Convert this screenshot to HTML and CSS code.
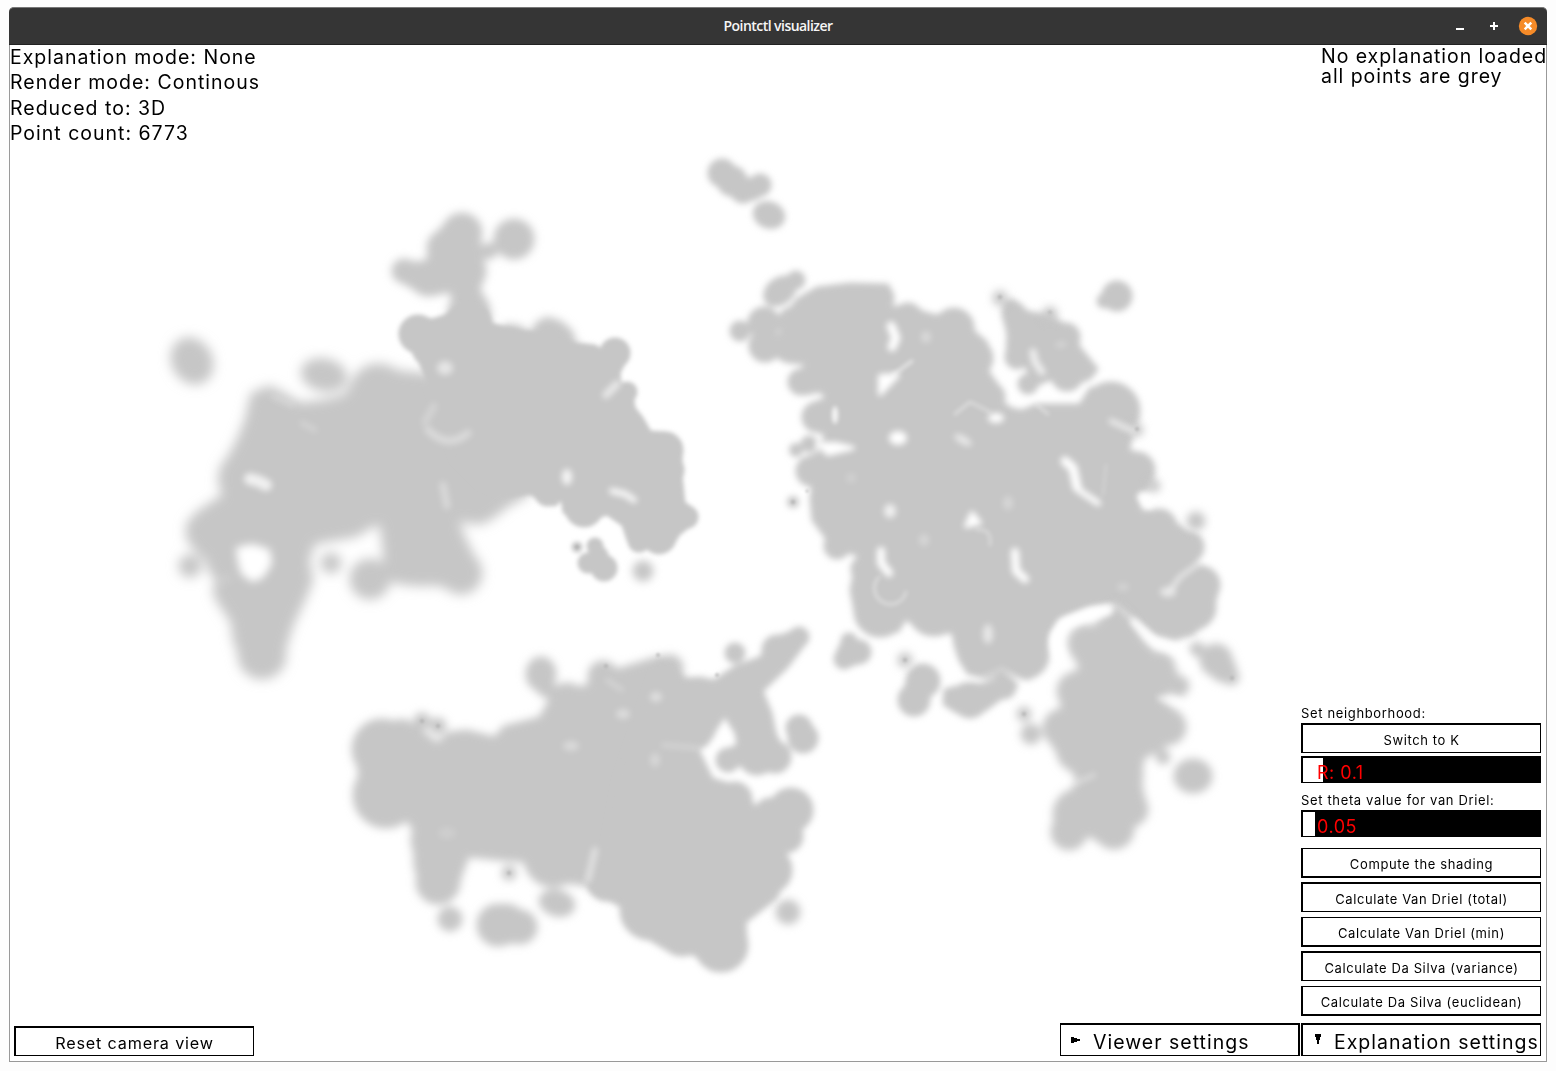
FILE: index.html
```html
<!DOCTYPE html>
<html lang="en">
<head>
<meta charset="utf-8">
<title>Pointctl visualizer</title>
<link rel="stylesheet" href="styles.css">
</head>
<body>
<div class="window">
  <header class="titlebar">
    <h1 class="title">Pointctl visualizer</h1>
    <div class="controls">
      <svg width="10" height="18" viewBox="0 0 10 18"><path d="M1 12h8" stroke="#fff" stroke-width="2"/></svg>
      <svg width="10" height="18" viewBox="0 0 10 18"><path d="M1 9h8M5 5v8" stroke="#fff" stroke-width="2"/></svg>
      <svg width="20" height="20" viewBox="0 0 20 20"><circle cx="10" cy="10" r="9.2" fill="#f68b28"/><path d="M6.7 6.7l6.6 6.6M13.3 6.7l-6.6 6.6" stroke="#fff" stroke-width="2.5"/></svg>
    </div>
  </header>
  <main class="viewport">
    <svg class="cloud" viewBox="10 45 1536 1016" width="1536" height="1016">
      <defs>
        <filter id="b1" filterUnits="userSpaceOnUse" x="10" y="45" width="1536" height="1016"><feGaussianBlur stdDeviation="2"/></filter>
        <filter id="b2" filterUnits="userSpaceOnUse" x="10" y="45" width="1536" height="1016"><feGaussianBlur stdDeviation="3"/></filter>
        <filter id="b3" filterUnits="userSpaceOnUse" x="10" y="45" width="1536" height="1016"><feGaussianBlur stdDeviation="4.200"/></filter>
        <filter id="b5" filterUnits="userSpaceOnUse" x="10" y="45" width="1536" height="1016"><feGaussianBlur stdDeviation="5.600"/></filter>
      </defs>
      <!-- left cluster -->
      <g class="pts" filter="url(#b5)">
        <ellipse cx="192" cy="361" rx="19" ry="23" transform="rotate(-30 192 361)"/>
        <ellipse cx="324" cy="375" rx="22" ry="15" transform="rotate(12 324 375)"/>
        <path d="M252 394 270 387 285 395 300 404 325 401 345 396 356 378 370 368 382 365 400 372 420 374 470 380 520 420 535 485 525 496 505 507 497 514 483 520 465 519 458 522 465 540 475 560 477 573 470 588 460 593 448 587 435 584 420 585 400 583 386 578 384 550 381 525 376 524 355 536 330 540 314 543 308 560 312 580 306 595 299 610 292 625 286 645 279 662 271 674 262 677 251 671 240 655 234 640 232 622 224 610 216 598 214 588 222 572 198 552 188 540 187 525 197 513 212 503 224 495 219 482 221 468 230 455 238 440 246 420 250 402Z"/>
        <circle cx="370" cy="579" r="19"/><circle cx="222" cy="564" r="14"/><circle cx="190" cy="566" r="10"/><circle cx="331" cy="563" r="9"/>
        <circle cx="461" cy="573" r="20"/><circle cx="476" cy="498" r="25"/><circle cx="378" cy="392" r="27"/><circle cx="262" cy="655" r="23"/>
      </g>
      <g class="gaps" filter="url(#b3)">
        <path d="M238 549 252 546 268 551 270 563 262 576 253 580 243 573 240 563Z" class="solid"/>
        <path d="M222 582 230 577" stroke-width="3" opacity=".3"/>
      </g>
      <g class="pts" filter="url(#b3)">
        <path d="M397 271 410 262 428 264 430 242 450 219 462 215 476 225 481 250 484 270 479 290 485 300 491 320 470 330 455 303 450 291 430 295 415 289 401 281Z"/>
        <circle cx="514" cy="239" r="19"/><circle cx="489" cy="251" r="7"/><circle cx="462" cy="233" r="19"/><circle cx="404" cy="271" r="11"/><circle cx="428" cy="278" r="17"/><circle cx="466" cy="271" r="19"/><circle cx="469" cy="312" r="20"/><circle cx="445" cy="248" r="17"/>
        <path d="M500 340 506 325 520 327 531 335 537 323 547 318 560 322 571 331 576 345 590 350 540 380Z"/>
        <circle cx="643" cy="571" r="9"/>
      </g>
      <g class="pts" filter="url(#b1)">
        <path d="M408 320 420 317 432 320 445 316 460 306 485 310 492 324 520 332 545 334 575 345 595 346 603 351 613 343 621 342 627 349 625 361 619 373 620 384 628 385 632 393 634 408 642 418 650 432 665 433 674 439 681 453 681 475 684 503 693 509 694 518 688 527 679 534 671 547 658 552 645 547 635 548 628 540 623 525 607 514 598 517 590 525 578 523 564 512 562 498 555 505 545 503 530 493 505 496 480 485 455 460 440 420 425 375 417 355 405 345 400 332Z"/>
        <circle cx="418" cy="334" r="18"/><circle cx="431" cy="348" r="18"/><circle cx="615" cy="353" r="14"/><circle cx="627" cy="392" r="9"/><circle cx="665" cy="450" r="17"/><circle cx="667" cy="470" r="16"/><circle cx="687" cy="517" r="10"/><circle cx="659" cy="537" r="16"/><circle cx="584" cy="508" r="18"/><circle cx="639" cy="541" r="10"/><circle cx="548" cy="492" r="13"/>
        <circle cx="577" cy="547" r="4"/><circle cx="595" cy="546" r="7"/><circle cx="604" cy="568" r="12"/><circle cx="588" cy="563" r="9"/><circle cx="598" cy="556" r="9"/>
      </g>
      <!-- islands at the top and the right cluster -->
      <g class="pts" filter="url(#b2)">
        <circle cx="722" cy="173" r="13"/><circle cx="732" cy="181" r="14"/><circle cx="743" cy="190" r="12"/><circle cx="760" cy="185" r="10"/><circle cx="752" cy="189" r="10"/>
        <ellipse cx="769" cy="215" rx="15" ry="12" transform="rotate(20 769 215)"/>
        <ellipse cx="780" cy="291" rx="17" ry="12" transform="rotate(-38 780 291)"/><circle cx="796" cy="280" r="8"/>
        <circle cx="740" cy="331" r="9"/><circle cx="764" cy="323" r="15"/><circle cx="765" cy="346" r="15"/>
        <path d="M785 316 798 299 817 288 850 284 888 285 891 295 886 308 896 307 908 306 925 313 937 316 948 311 960 310 968 317 974 332 986 342 991 355 988 372 1001 390 1001 402 1012 409 1022 411 1037 405 1080 405 1090 389 1110 384 1125 389 1134 401 1137 420 1128 450 1143 456 1151 466 1153 480 1148 489 1137 494 1141 511 1153 512 1162 511 1171 520 1186 531 1199 541 1202 552 1194 564 1207 569 1216 581 1216 598 1207 621 1193 634 1175 639 1155 634 1140 622 1115 603 1090 606 1062 617 1049 632 1046 655 1037 674 1028 679 1010 672 985 678 968 673 960 660 955 645 953 632 935 633 917 627 906 618 898 631 885 634 867 627 855 611 851 590 855 570 865 558 850 552 838 556 828 540 813 520 811 498 813 484 801 475 805 459 820 452 826 434 808 428 805 415 812 404 828 398 820 391 805 394 792 386 797 377 812 364 790 362 783 355Z"/>
        <circle cx="790" cy="346" r="16"/><circle cx="793" cy="322" r="14"/><circle cx="801" cy="382" r="12"/><circle cx="812" cy="376" r="12"/><circle cx="817" cy="417" r="14"/><circle cx="811" cy="471" r="14"/><circle cx="837" cy="546" r="12"/><circle cx="864" cy="569" r="12"/><circle cx="880" cy="611" r="25"/><circle cx="934" cy="609" r="26"/><circle cx="908" cy="317" r="13"/><circle cx="954" cy="328" r="19"/><circle cx="975" cy="358" r="17"/><circle cx="991" cy="397" r="13"/>
        <circle cx="1111" cy="411" r="28"/><circle cx="1137" cy="470" r="17"/><circle cx="1159" cy="527" r="17"/><circle cx="1188" cy="547" r="15"/><circle cx="1201" cy="585" r="18"/><circle cx="1193" cy="607" r="22"/><circle cx="1025" cy="655" r="23"/><circle cx="881" cy="298" r="12"/>
        <path d="M1003 314 1004 302 1013 300 1027 312 1050 316 1061 323 1075 329 1079 347 1097 369 1090 378 1067 387 1050 379 1028 389 1021 384 1030 375 1025 364 1013 366 1007 357 1008 334Z"/>
        <circle cx="1066" cy="337" r="13"/><circle cx="1017" cy="357" r="11"/><circle cx="1028" cy="384" r="9"/><circle cx="1067" cy="375" r="15"/><circle cx="1014" cy="314" r="11"/>
        <circle cx="1117" cy="296" r="14"/><circle cx="1104" cy="301" r="6"/>
        <circle cx="844" cy="659" r="9"/><circle cx="859" cy="652" r="11"/><circle cx="849" cy="641" r="7"/><circle cx="850" cy="653" r="12"/>
        <path d="M902 700 907 682 920 668 935 670 939 680 931 693 924 706 915 715 905 710Z"/><circle cx="923" cy="681" r="16"/><circle cx="914" cy="700" r="15"/>
        <path d="M945 690 965 685 985 684 1005 676 1017 685 1000 699 985 710 970 717 955 711 944 704Z"/><circle cx="970" cy="700" r="17"/><circle cx="1004" cy="687" r="11"/>
        <circle cx="796" cy="450" r="5.500"/><circle cx="809" cy="444" r="7"/><circle cx="793" cy="502" r="4.500"/>
      </g>
      <g class="pts" filter="url(#b3)">
        <path d="M1115 604 1130 618 1142 640 1157 655 1175 670 1180 684 1171 690 1160 700 1179 714 1183 728 1172 740 1160 749 1143 758 1140 780 1144 800 1140 817 1128 831 1115 843 1100 842 1088 834 1075 843 1064 842 1056 825 1057 809 1073 791 1078 778 1062 760 1050 740 1047 725 1062 708 1061 695 1064 680 1081 668 1070 650 1074 636 1090 630 1103 618Z"/>
        <circle cx="1086" cy="643" r="17"/><circle cx="1076" cy="691" r="18"/><circle cx="1062" cy="728" r="18"/><circle cx="1076" cy="752" r="18"/><circle cx="1168" cy="727" r="17"/><circle cx="1078" cy="814" r="24"/><circle cx="1069" cy="832" r="17"/><circle cx="1114" cy="829" r="19"/><circle cx="1130" cy="809" r="17"/><circle cx="1125" cy="776" r="17"/><circle cx="1159" cy="668" r="15"/><circle cx="1179" cy="686" r="9"/>
        <circle cx="1216" cy="660" r="15"/><circle cx="1231" cy="677" r="7"/><circle cx="1223" cy="669" r="12"/><circle cx="1197" cy="649" r="6"/>
        <ellipse cx="1193" cy="776" rx="18" ry="16"/><circle cx="1024" cy="714" r="6"/><circle cx="1031" cy="734" r="9"/><circle cx="1196" cy="521" r="8"/><circle cx="905" cy="660" r="6"/><circle cx="1163" cy="757" r="6"/><circle cx="1137" cy="430" r="5"/><circle cx="1050" cy="314" r="6"/><circle cx="1000" cy="298" r="6"/><circle cx="1154" cy="486" r="5"/>
      </g>
      <!-- bottom cluster -->
      <g class="pts" filter="url(#b3)">
        <path d="M362 738 375 725 405 720 421 731 437 744 449 733 467 731 495 738 504 727 540 718 549 702 562 687 587 687 592 675 605 666 617 670 640 663 660 657 676 662 683 678 680 740 690 765 650 880 617 900 602 896 588 885 573 883 540 880 524 861 497 859 468 856 457 886 445 902 437 902 423 890 415 867 414 830 405 816 383 823 371 815 360 793 358 753Z"/>
        <circle cx="382" cy="749" r="29"/><circle cx="386" cy="795" r="32"/><circle cx="436" cy="840" r="24"/><circle cx="438" cy="882" r="21"/><circle cx="567" cy="702" r="18"/><circle cx="603" cy="676" r="14"/><circle cx="670" cy="668" r="12"/><circle cx="553" cy="858" r="28"/>
        <ellipse cx="541" cy="674" rx="14" ry="16"/><circle cx="546" cy="688" r="8"/><circle cx="498" cy="925" r="20"/><circle cx="506" cy="924" r="19"/><circle cx="520" cy="927" r="16"/>
        <ellipse cx="557" cy="903" rx="17" ry="12" transform="rotate(15 557 903)"/><circle cx="450" cy="919" r="11"/><circle cx="509" cy="873" r="6"/><circle cx="788" cy="912" r="11"/>
        <circle cx="422" cy="721" r="7"/><circle cx="438" cy="726" r="7"/>
      </g>
      <g class="pts" filter="url(#b2)">
        <path d="M660 662 683 679 700 678 714 681 735 667 762 657 766 643 778 637 797 630 805 635 802 647 786 668 762 691 771 713 775 733 786 757 783 766 757 772 741 764 727 767 721 760 725 751 738 745 736 733 725 715 713 733 706 745 697 748 712 779 738 787 749 798 755 808 768 803 790 792 803 799 808 812 799 827 798 841 785 853 789 870 776 898 745 922 746 943 736 962 720 969 693 954 673 953 634 930 622 907 600 890 620 780Z"/>
        <circle cx="777" cy="650" r="14"/><circle cx="799" cy="637" r="9"/><circle cx="747" cy="713" r="20"/><circle cx="757" cy="756" r="18"/><circle cx="775" cy="757" r="15"/><circle cx="728" cy="760" r="11"/><circle cx="735" cy="799" r="16"/><circle cx="791" cy="810" r="21"/><circle cx="770" cy="814" r="15"/><circle cx="786" cy="836" r="16"/><circle cx="768" cy="870" r="23"/><circle cx="721" cy="945" r="26"/><circle cx="695" cy="726" r="20"/><circle cx="650" cy="910" r="29"/><circle cx="682" cy="935" r="20"/><circle cx="605" cy="883" r="16"/>
        <circle cx="735" cy="653" r="9"/><circle cx="799" cy="728" r="12"/><circle cx="803" cy="738" r="14"/>
      </g>
      <!-- gaps between the point groups -->
      <g class="gaps" filter="url(#b2)">
        <path d="M891 326 L896 338 892 347" stroke-width="9"/><path d="M880 376 V394 L898 375Z" class="solid"/>
        <ellipse cx="898" cy="438" rx="9" ry="7"/><path d="M818 444 828 454 853 448 836 444Z" class="solid"/>
        <ellipse cx="890" cy="511" rx="6" ry="7" opacity=".75"/><path d="M966 526 972 513 980 523Z" class="solid"/>
        <ellipse cx="963" cy="440" rx="10" ry="4" transform="rotate(30 963 440)" opacity=".6"/><ellipse cx="996" cy="418" rx="8" ry="5"/>
        <path d="M881 551V563L889 573" stroke-width="8"/><path d="M1065 461 1073 468 1077 487" stroke-width="9"/><path d="M1077 489 1098 503" stroke-width="6"/>
        <path d="M1015 552 1016 571 1025 579" stroke-width="8"/><ellipse cx="1168" cy="592" rx="8" ry="5" opacity=".6"/><path d="M1172 588 1180 577 1198 564" stroke-width="4" opacity=".7"/>
        <path d="M1111 421 1133 431" stroke-width="5" opacity=".7"/><path d="M1134 622 1155 643 1180 652 1192 670" stroke-width="7" opacity=".85"/>
        <path d="M1108 610 1088 614 1062 624 1055 640 1060 658" stroke-width="10"/><path d="M1160 698 1182 703" stroke-width="5" opacity=".7"/>
        <ellipse cx="988" cy="634" rx="5" ry="10" opacity=".6"/><path d="M965 680 980 679 1002 669 1020 680" stroke-width="3" opacity=".4"/>
        <path d="M1033 352 1035 362 1042 372" stroke-width="7" opacity=".75"/><path d="M1064 344 1058 345" stroke-width="5" opacity=".3"/>
        <path d="M1142 497 1148 503" stroke-width="8"/><path d="M1076 783 1094 775" stroke-width="5" opacity=".35"/>
        <path d="M250 479 258 481 266 485" stroke-width="12" opacity=".75"/><ellipse cx="445" cy="368" rx="8" ry="7" opacity=".55"/>
        <path d="M428 430Q448 450 468 433" stroke-width="7" opacity=".38"/><path d="M434 406 425 422" stroke-width="7" opacity=".25"/>
        <ellipse cx="567" cy="477" rx="5" ry="8" opacity=".85"/><path d="M612 491 625 494 634 500" stroke-width="6" opacity=".9"/>
        <path d="M606 395 617 384" stroke-width="7" opacity=".65"/><path d="M443 485 447 506" stroke-width="7" opacity=".35"/>
        <path d="M595 850 588 880" stroke-width="6" opacity=".5"/><ellipse cx="656" cy="697" rx="6" ry="5" opacity=".45"/><ellipse cx="623" cy="714" rx="7" ry="5" opacity=".4"/><ellipse cx="571" cy="746" rx="8" ry="5" opacity=".35"/><ellipse cx="655" cy="760" rx="5" ry="7" opacity=".3"/><path d="M663 745 697 748" stroke-width="4" opacity=".3"/><ellipse cx="447" cy="833" rx="9" ry="6" opacity=".15"/><path d="M607 680 622 690" stroke-width="4" opacity=".3"/>
        <path d="M302 423 315 430 M273 397 292 405" stroke-width="5" opacity=".25"/><ellipse cx="926" cy="337" rx="5" ry="6" opacity=".35"/><ellipse cx="924" cy="540" rx="5" ry="6" opacity=".3"/><ellipse cx="1008" cy="503" rx="5" ry="7" opacity=".3"/><ellipse cx="1123" cy="587" rx="6" ry="4" opacity=".25"/><ellipse cx="851" cy="478" rx="5" ry="5" opacity=".2"/>
      </g>
      <g class="gaps" filter="url(#b1)">
        <ellipse cx="835" cy="415" rx="3" ry="9" opacity=".85"/><path d="M879 577A16 16 0 1 0 906 592M955 414 970 402 990 412M1037 405 1048 414" stroke-width="3" opacity=".4"/>
        <path d="M977 530Q992 528 990 545" stroke-width="3" opacity=".35"/><path d="M1106 465 1103 495" stroke-width="3" opacity=".2"/><path d="M893 375 912 361" stroke-width="3" opacity=".6"/>
      </g>
      <g class="cores">
        <circle cx="422" cy="721" r="2"/><circle cx="438" cy="726" r="2"/><circle cx="509" cy="873" r="2"/><circle cx="793" cy="502" r="2"/><circle cx="1000" cy="297" r="2"/><circle cx="905" cy="660" r="2"/><circle cx="1024" cy="714" r="2"/><circle cx="1232" cy="678" r="2"/><circle cx="606" cy="666" r="2"/><circle cx="658" cy="655" r="2"/><circle cx="717" cy="675" r="2"/><circle cx="1137" cy="429" r="2"/><circle cx="577" cy="547" r="2"/><circle cx="807" cy="491" r="1.500"/><circle cx="1050" cy="312" r="1.500"/>
      </g>
    </svg>

    <div class="hud">
      <div class="status">
        <p>Explanation mode: None</p>
        <p>Render mode: Continous</p>
        <p>Reduced to: 3D</p>
        <p>Point count: 6773</p>
      </div>
      <div class="legend">No explanation loaded<br>all points are grey</div>
    </div>

    <div class="bottom">
      <button class="btn reset">Reset camera view</button>
      <div class="right">
        <button class="btn toggle viewer"><svg width="9" height="6" viewBox="0 0 9 6"><path d="M0 0H3V1H6V2H9V4H6V5H3V6H0Z"/></svg><span>Viewer settings</span></button>
        <div class="panel">
          <p class="label">Set neighborhood:</p>
          <button class="btn small first">Switch to K</button>
          <div class="slider"><i style="width:20px"></i><b>R: 0.1</b></div>
          <p class="label theta">Set theta value for van Driel:</p>
          <div class="slider"><i style="width:12px"></i><b>0.05</b></div>
          <div class="actions">
            <button class="btn small odd">Compute the shading</button>
            <button class="btn small">Calculate Van Driel (total)</button>
            <button class="btn small odd">Calculate Van Driel (min)</button>
            <button class="btn small">Calculate Da Silva (variance)</button>
            <button class="btn small odd">Calculate Da Silva (euclidean)</button>
          </div>
          <button class="btn toggle explain"><svg width="6" height="10" viewBox="0 0 6 10"><path d="M0 0H6V3H5V6H4V10H2V6H1V3H0Z"/></svg><span>Explanation settings</span></button>
        </div>
      </div>
    </div>
  </main>
</div>
</body>
</html>
```
FILE: styles.css
```css
* { box-sizing: border-box; }
body { margin: 0; padding: 7px 9px 9px; height: 1071px; background: #fdfdfd; font-family: Inter, "Open Sans", sans-serif; color: #000; overflow: hidden; }
p, h1 { margin: 0; font-weight: 400; }
.window { width: 1538px; height: 1055px; border: 1px solid #999; border-top: 0; border-radius: 5px 5px 0 0; background: #fff; }
.titlebar { height: 38px; margin: 0 -1px; border: 0 solid #777; border-top-width: 1px; border-bottom: 1px solid #222; border-radius: 5px 5px 0 0; background: #353535; display: grid; grid-template-columns: 1fr auto 1fr; align-items: start; }
.title { grid-column: 2; color: #f5f5f5; font: 600 14px/36px "Open Sans", sans-serif; letter-spacing: -0.55px; }
.controls { display: flex; justify-content: flex-end; align-items: center; gap: 24px; height: 36px; padding-right: 9px; }
.controls svg:last-child { margin-left: -5px; }
.viewport { display: grid; width: 1536px; height: 1016px; }
.cloud, .hud, .bottom { grid-area: 1 / 1; }
.pts { fill: #c6c6c6; stroke: #c6c6c6; stroke-width: 3; stroke-linejoin: round; }
.gaps { fill: #fff; }
.gaps path { fill: none; stroke: #fff; stroke-linecap: round; stroke-linejoin: round; }
.gaps .solid { fill: #fff; stroke-width: 4; }
.cores { fill: #a8a8a8; opacity: .6; filter: blur(.8px); }
.hud { display: flex; justify-content: space-between; align-items: flex-start; font-size: 19.5px; letter-spacing: 1px; white-space: nowrap; }
.status { line-height: 25.5px; margin-top: -0.5px; }
.legend { width: 225px; padding-top: 1px; line-height: 20px; letter-spacing: .95px; }
.bottom { align-self: end; display: flex; justify-content: space-between; align-items: flex-end; padding: 0 5px 5px 4px; }
.right { display: flex; align-items: flex-end; gap: 1px; }
.panel { width: 240px; display: flex; flex-direction: column; }
.btn { display: block; width: 240px; height: 30px; padding: 0; margin: 0; border: solid #000; border-width: 2px 1px 1px 2px; border-radius: 0; background: #fff; color: #000; font-family: inherit; text-align: center; white-space: nowrap; line-height: 27px; }
.reset { padding-top: 4px; line-height: 23px; font-size: 16.2px; letter-spacing: .82px; }
.small { padding-top: 4px; line-height: 23px; font-size: 13px; letter-spacing: .62px; }
.first { padding-top: 3px; line-height: 24px; }
.odd { border-width: 1px 1px 2px 2px; padding-top: 4px; line-height: 23px; }
.toggle { height: 33px; display: flex; align-items: flex-start; font-size: 19.5px; letter-spacing: 1px; }
.toggle span { padding-top: 5px; line-height: 25px; }
.viewer { border-width: 2px 2px 1px 1px; padding-left: 10px; }
.viewer svg { margin-top: 12px; }
.viewer span { margin-left: 13px; }
.explain { margin-top: 7px; padding-left: 12px; }
.explain svg { margin-top: 9px; }
.explain span { margin-left: 13px; }
.label { font-size: 13px; line-height: 17px; height: 18px; letter-spacing: .65px; white-space: nowrap; }
.theta { margin-top: 9px; }
.slider { height: 27px; margin-top: 3px; background: #000; padding: 2px 1px 1px 2px; display: grid; grid-template-columns: 14px 1fr; }
.theta + .slider { margin-top: 0; }
.slider i { grid-area: 1 / 1; height: 24px; background: #fff; }
.slider b { grid-area: 1 / 2; color: #f00; font-weight: 400; font-size: 18px; line-height: 29px; letter-spacing: .5px; position: relative; }
.actions { margin-top: 11px; display: flex; flex-direction: column; gap: 4px; }
.odd:nth-child(n + 2) { margin-top: 1px; }
```
